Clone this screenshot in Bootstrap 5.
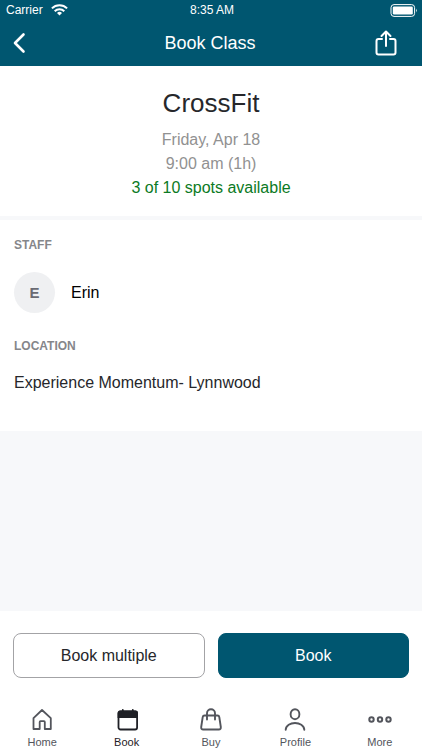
<!DOCTYPE html>
<html lang="en">
<head>
<meta charset="utf-8">
<meta name="viewport" content="width=device-width, initial-scale=1">
<title>Book Class</title>
<link href="https://cdn.jsdelivr.net/npm/bootstrap@5.3.0/dist/css/bootstrap.min.css" rel="stylesheet">
<style>
body { font-family: "Liberation Sans", Arial, sans-serif; color: #26272b; font-size: 16px; line-height: 24px; background: #f7f8fa; }
svg { display: block; fill: none; stroke: currentColor; }
.bar-top { background: #005670; }
.status { font-size: 12px; line-height: 20px; padding: 0 4px 0 6px; }
.title-row { height: 46px; padding: 0 12px 0 10px; }
.title-row h1 { font-size: 18px; line-height: 24px; }
.side { flex: 1 1 0; }
.plain { background: none; border: 0; padding: 0; color: inherit; }
.share { margin-right: 12px; }
.summary { padding: 20px 16px 16px; border-bottom: 4px solid #f7f8fa; color: #919191; }
.summary h2 { font-size: 26px; line-height: 34px; margin-bottom: 8px; color: #26272b; }
.summary .spots { color: #0b7a24; }
.details { padding: 16px 14px 36px; }
.details h3 { font-size: 12px; line-height: 18px; margin-bottom: 16px; color: #85868a; }
.staff { padding-top: 2px; margin-bottom: 24px; }
.avatar { width: 41px; height: 41px; background: #eff0f2; color: #696b73; font-size: 15px; }
.actions { padding: 22px 13px 14px; gap: 13px; }
.action { --bs-btn-font-size: 16px; height: 45px; border-radius: 8px; }
.action-main { --bs-btn-color: #fff; --bs-btn-bg: #005670; --bs-btn-border-color: #005670; --bs-btn-hover-color: #fff; --bs-btn-hover-bg: #004a61; }
.action-line { --bs-btn-color: #26272b; --bs-btn-bg: #fff; --bs-btn-border-color: #a3a3a6; --bs-btn-hover-bg: #f2f2f2; }
.tabs { height: 58px; padding-top: 16px; font-size: 11px; line-height: 14px; }
.tabs a { color: #53555c; gap: 3px; }
.tabs a.active { color: #1f2026; }
</style>
<script src="https://cdn.jsdelivr.net/npm/bootstrap@5.3.0/dist/js/bootstrap.bundle.min.js"></script>
</head>
<body class="d-flex flex-column min-vh-100">
<header class="bar-top text-white">
  <div class="status d-flex">
    <div class="side d-flex align-items-center gap-2">
      <span>Carrier</span>
      <svg width="17" height="12" viewBox="0 0 17 12" stroke-width="2" aria-hidden="true"><path d="M.9 4.400a10.800 10.800 0 0 1 15.200 0M3.700 7.200a6.800 6.800 0 0 1 9.600 0"/><path d="M6 9a3.500 3.500 0 0 1 5 0L8.500 11.600z" fill="currentColor" stroke="none"/></svg>
    </div>
    <span>8:35 AM</span>
    <div class="side d-flex align-items-center justify-content-end">
      <svg width="28" height="13" viewBox="0 0 28 13" aria-hidden="true"><rect x="1" y=".6" width="23.600" height="11.800" rx="3"/><rect x="2.800" y="2.400" width="20" height="8.200" rx="1.300" fill="currentColor" stroke="none"/><path d="M26 4.600q1.600 1.900 0 3.800z" fill="currentColor" stroke="none"/></svg>
    </div>
  </div>
  <div class="title-row d-flex align-items-center">
    <div class="side d-flex"><button class="plain" type="button" aria-label="Back"><svg width="18" height="22" viewBox="0 0 18 22" stroke-width="2.600" stroke-linecap="round" stroke-linejoin="round"><path d="M13.500 2.500 5 11l8.500 8.500"/></svg></button></div>
    <h1 class="m-0 fw-normal">Book Class</h1>
    <div class="side d-flex justify-content-end"><button class="plain share" type="button" aria-label="Share"><svg width="24" height="26" viewBox="0 0 24 26" stroke-width="2" stroke-linecap="round" stroke-linejoin="round"><path d="M8 9H4.500Q2.500 9 2.500 11V22.500Q2.500 24.500 4.500 24.500H19.500Q21.500 24.500 21.500 22.500V11Q21.500 9 19.500 9H16M12 16V2M7.500 6 12 1.500 16.500 6"/></svg></button></div>
  </div>
</header>
<main class="flex-grow-1">
  <section class="summary bg-white text-center">
    <h2 class="fw-normal">CrossFit</h2>
    <div>Friday, Apr 18</div>
    <div>9:00 am (1h)</div>
    <div class="spots">3 of 10 spots available</div>
  </section>
  <section class="details bg-white">
    <h3 class="fw-bold">STAFF</h3>
    <div class="staff d-flex align-items-center gap-3 text-black">
      <span class="avatar rounded-circle fw-bold d-flex align-items-center justify-content-center">E</span>
      <span>Erin</span>
    </div>
    <h3 class="fw-bold">LOCATION</h3>
    <div>Experience Momentum- Lynnwood</div>
  </section>
</main>
<footer class="bg-white">
  <div class="actions d-flex">
    <button type="button" class="btn action action-line w-50">Book multiple</button>
    <button type="button" class="btn action action-main w-50">Book</button>
  </div>
  <nav class="tabs d-flex" aria-label="Main">
    <a class="side d-flex flex-column align-items-center text-decoration-none" href="#home"><svg width="24" height="24" viewBox="0 0 24 24" stroke-width="1.800" stroke-linejoin="round"><path d="M3.500 10.200 12 2l8.800 8.200V21H14.800V14Q14.800 13.200 14 13.200H10.500Q9.700 13.200 9.700 14V21H3.500z"/></svg>Home</a>
    <a class="side active d-flex flex-column align-items-center text-decoration-none" href="#book" aria-current="page"><svg width="24" height="24" viewBox="0 0 24 24" stroke-width="1.800"><rect x="3.500" y="3.500" width="18.600" height="18" rx="2"/><path d="M3.500 9V5Q3.500 3.500 5 3.500H20.500Q22.100 3.500 22.100 5V9z" fill="currentColor"/><path d="M7.800 2v3M17.800 2v3" stroke-linecap="round"/></svg>Book</a>
    <a class="side d-flex flex-column align-items-center text-decoration-none" href="#buy"><svg width="24" height="24" viewBox="0 0 24 24" stroke-width="1.900" stroke-linecap="round" stroke-linejoin="round"><path d="M5.500 7.500H18.500Q20 7.500 20.300 9.200L21.800 19Q22 21.500 19.800 21.500H4.200Q2 21.500 2.200 19L3.700 9.200Q4 7.500 5.500 7.500zM8 11.500V5.200a4 4 0 0 1 8 0V11.500"/></svg>Buy</a>
    <a class="side d-flex flex-column align-items-center text-decoration-none" href="#profile"><svg width="24" height="24" viewBox="0 0 24 24" stroke-width="1.900" stroke-linecap="round"><ellipse cx="12" cy="6.200" rx="4.400" ry="5"/><path d="M2.700 21.800C3 12.800 21 12.800 21.300 21.800"/></svg>Profile</a>
    <a class="side d-flex flex-column align-items-center text-decoration-none" href="#more"><svg width="24" height="24" viewBox="0 0 24 24" stroke-width="2"><circle cx="3.500" cy="11.500" r="2.200"/><circle cx="12" cy="11.500" r="2.200"/><circle cx="20.500" cy="11.500" r="2.200"/></svg>More</a>
  </nav>
</footer>
</body>
</html>
